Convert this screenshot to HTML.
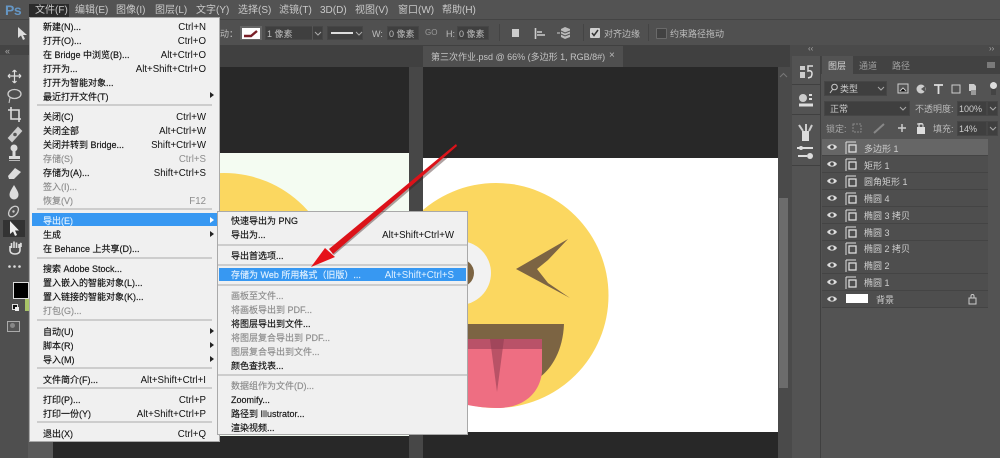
<!DOCTYPE html>
<html><head><meta charset="utf-8">
<style>
html,body{margin:0;padding:0;background:#282828}
#p{position:relative;width:1000px;height:458px;overflow:hidden;background:#282828;font-family:"Liberation Sans","Noto Sans CJK SC",sans-serif;font-size:9px;filter:blur(.3px)}
.a{position:absolute}
.t{position:absolute;white-space:nowrap;line-height:14px}
.m{color:#c9c9c9;top:4px;font-size:10px}
.o{color:#bdbdbd;line-height:14px;position:absolute;white-space:nowrap;font-size:9px;margin-top:1px}
#menu,#sub{position:absolute;background:#f0f0f0;border:1px solid #a9a9a9;box-sizing:border-box}
#menu{left:29px;top:17px;width:191px;height:425px}
#sub{left:217px;top:211px;width:251px;height:224px}
.i{position:absolute;left:13px;line-height:14px;color:#111;white-space:nowrap;margin-top:.5px;-webkit-text-stroke:.15px currentColor}
#sub .i{left:13px}
.k{position:absolute;right:13px;line-height:14px;color:#111;white-space:nowrap;font-size:9.7px;margin-top:1.5px}
#sub .k{right:13px}
.d{color:#8d8d8d}
.s{position:absolute;left:7px;right:7px;height:2px;background:#cdcdcd}
#sub .s{left:0;right:0}
.r{position:absolute;right:5px;width:0;height:0;border-left:4px solid #222;border-top:3px solid transparent;border-bottom:3px solid transparent}
.row{position:absolute;left:822px;width:166px;height:16px;background:#4e4e4e;border-bottom:1px solid #444}
.n{position:absolute;left:864px;color:#cfcfcf;line-height:14px;white-space:nowrap;font-size:9px;margin-top:1px}
.box{position:absolute;background:#3f3f3f;border:1px solid #464646;box-sizing:border-box}
.p9{font-size:9px}
</style></head><body><div id="p">

<!-- bars -->
<div class="a" style="left:0;top:0;width:1000px;height:19px;background:#535353"></div>
<div class="a" style="left:0;top:19px;width:1000px;height:26px;background:#505050;border-top:1px solid #444;box-sizing:border-box"></div>
<div class="a" style="left:0;top:45px;width:1000px;height:22px;background:#404040"></div>
<div class="a" style="left:0;top:45px;width:28px;height:413px;background:#4f4f4f"></div>
<div class="a" style="left:28px;top:45px;width:25px;height:413px;background:#5a5a5a"></div>
<div class="a" style="left:0;top:45px;width:53px;height:10px;background:#444"></div>
<div class="t" style="left:5px;top:44px;color:#aaa;font-size:9px">«</div>
<div class="t" style="left:5px;top:-1px;font-size:14px;font-weight:bold;line-height:22px;letter-spacing:-.5px;color:#6596c4">Ps</div>
<div class="a" style="left:29px;top:4px;width:40px;height:14px;background:#2b2b2b"></div>
<div class="t m" style="left:35px">文件(F)</div>
<div class="t m" style="left:75px">编辑(E)</div>
<div class="t m" style="left:116px">图像(I)</div>
<div class="t m" style="left:155px">图层(L)</div>
<div class="t m" style="left:196px">文字(Y)</div>
<div class="t m" style="left:238px">选择(S)</div>
<div class="t m" style="left:279px">滤镜(T)</div>
<div class="t m" style="left:320px">3D(D)</div>
<div class="t m" style="left:355px">视图(V)</div>
<div class="t m" style="left:398px">窗口(W)</div>
<div class="t m" style="left:442px">帮助(H)</div>

<!-- options -->
<svg class="a" style="left:16px;top:26px" width="12" height="15"><path d="M2 1V12L5 9.500 7 14 9 13 7 9H11Z" fill="#ddd"/></svg>
<div class="o" style="left:220px;top:26px">动：</div>
<div class="a" style="left:240px;top:26px;width:22px;height:14px;background:#666"></div>
<svg class="a" style="left:242px;top:28px" width="18" height="11"><rect width="18" height="11" fill="#fff"/><path d="M2 8H9L15 3" stroke="#7a2028" stroke-width="2.400" fill="none"/></svg>
<div class="box" style="left:265px;top:26px;width:58px;height:14px"></div>
<div class="o" style="left:267px;top:26px">1 像素</div>
<div class="a" style="left:312px;top:26px;width:1px;height:14px;background:#555"></div>
<svg class="a" style="left:314px;top:31px" width="8" height="5"><path d="M1 1L4 4 7 1" stroke="#aaa" fill="none"/></svg>
<div class="box" style="left:327px;top:26px;width:36px;height:14px"></div>
<div class="a" style="left:331px;top:32px;width:22px;height:2px;background:#ddd"></div>
<svg class="a" style="left:355px;top:31px" width="8" height="5"><path d="M1 1L4 4 7 1" stroke="#aaa" fill="none"/></svg>
<div class="o" style="left:372px;top:26px">W:</div>
<div class="box" style="left:387px;top:26px;width:32px;height:14px"></div>
<div class="o" style="left:389px;top:26px">0 像素</div>
<div class="o" style="left:425px;top:25px;font-size:8px;color:#999">GO</div>
<div class="o" style="left:446px;top:26px">H:</div>
<div class="box" style="left:457px;top:26px;width:32px;height:14px"></div>
<div class="o" style="left:459px;top:26px">0 像素</div>
<div class="a" style="left:499px;top:24px;width:1px;height:17px;background:#444"></div>
<div class="a" style="left:512px;top:29px;width:7px;height:8px;background:#ccc"></div>
<svg class="a" style="left:534px;top:27px" width="14" height="14"><path d="M1.500 1V12M3 5H8M3 8H11" stroke="#ccc" stroke-width="1.600" fill="none"/></svg>
<svg class="a" style="left:556px;top:26px" width="16" height="15"><path d="M9 1L14 3V11L9 13 5 11V3Z" fill="#bbb"/><path d="M5 5L9 7 14 5M5 8L9 10 14 8" stroke="#555" fill="none"/><path d="M1 7H4" stroke="#ccc"/></svg>
<div class="a" style="left:583px;top:24px;width:1px;height:17px;background:#444"></div>
<div class="a" style="left:590px;top:28px;width:10px;height:10px;background:#cfcfcf;border-radius:1px"></div>
<svg class="a" style="left:591px;top:29px" width="8" height="8"><path d="M1 4L3 6.500 7 1" stroke="#333" stroke-width="1.500" fill="none"/></svg>
<div class="o" style="left:604px;top:26px">对齐边缘</div>
<div class="a" style="left:648px;top:24px;width:1px;height:17px;background:#444"></div>
<div class="a" style="left:656px;top:28px;width:9px;height:9px;background:#424242;border:1px solid #6a6a6a;border-radius:1px"></div>
<div class="o" style="left:670px;top:26px">约束路径拖动</div>

<!-- tab -->
<div class="a" style="left:423px;top:46px;width:200px;height:21px;background:#4f4f4f"></div>
<div class="t p9" style="left:431px;top:50px;color:#c4c4c4">第三次作业.psd @ 66% (多边形 1, RGB/8#)</div>
<div class="t" style="left:609px;top:49px;color:#bbb;font-size:10px">×</div>

<!-- canvases -->
<div class="a" style="left:53px;top:67px;width:356px;height:391px;background:#282828"></div>
<div class="a" style="left:409px;top:67px;width:14px;height:391px;background:#474747"></div>
<div class="a" style="left:53px;top:153px;width:356px;height:283px;background:#f4fcf2"></div>
<div class="a" style="left:423px;top:158px;width:355px;height:274px;background:#fff"></div>
<svg class="a" style="left:0;top:0" width="1000" height="458">
<clipPath id="l"><rect x="53" y="153" width="356" height="283"/></clipPath>
<clipPath id="rc"><rect x="423" y="158" width="355" height="274"/></clipPath>
<circle cx="224" cy="285" r="112" fill="#fbd760" clip-path="url(#l)"/>
<g clip-path="url(#rc)">
<circle cx="496" cy="295.500" r="112.500" fill="#fbd760"/>
<circle cx="459" cy="273" r="32" fill="#f2f2f2"/>
<circle cx="460" cy="273" r="14" fill="#7c6443"/>
<path d="M568 239L516 269 570 298 548 283 537 269 548 260Z" fill="#7c6443"/>
<path d="M420 324H564C563 350 552 368 540 377H420Z" fill="#7c6443"/>
<path d="M420 339H542V372C540 392 525 408 497 408 470 408 440 400 420 385Z" fill="#ee6e82"/>
<path d="M420 339H542V349H420Z" fill="#b95268"/>
<path d="M490 339H504L497 392Z" fill="#8e3c50" opacity=".55"/>
</g>
</svg>

<!-- scrollbar -->
<div class="a" style="left:778px;top:67px;width:12px;height:391px;background:#4a4a4a"></div>
<div class="a" style="left:779px;top:198px;width:9px;height:190px;background:#6c6c6c"></div>
<svg class="a" style="left:779px;top:72px" width="9" height="6"><path d="M1 5L4.500 1.500 8 5" stroke="#777" fill="none"/></svg>

<!-- dock + panel -->
<div class="a" style="left:790px;top:45px;width:210px;height:413px;background:#4a4a4a"></div>
<div class="a" style="left:792px;top:56px;width:28px;height:402px;background:#535353"></div>
<div class="a" style="left:792px;top:84px;width:28px;height:1px;background:#404040"></div>
<div class="a" style="left:792px;top:114px;width:28px;height:1px;background:#404040"></div>
<div class="a" style="left:792px;top:165px;width:28px;height:1px;background:#404040"></div>
<div class="a" style="left:820px;top:56px;width:1px;height:402px;background:#404040"></div>
<div class="a" style="left:821px;top:56px;width:179px;height:402px;background:#535353"></div>
<div class="a" style="left:821px;top:56px;width:179px;height:18px;background:#424242"></div>
<div class="a" style="left:822px;top:56px;width:31px;height:18px;background:#535353"></div>
<div class="t" style="left:808px;top:42px;color:#aaa;font-size:8px">‹‹</div>
<div class="t" style="left:989px;top:42px;color:#aaa;font-size:8px">››</div>
<div class="t p9" style="left:828px;top:59px;color:#d4d4d4">图层</div>
<div class="t p9" style="left:859px;top:59px;color:#a0a0a0">通道</div>
<div class="t p9" style="left:892px;top:59px;color:#a0a0a0">路径</div>
<div class="a" style="left:987px;top:62px;width:8px;height:6px;background:#7a7a7a"></div>
<svg class="a" style="left:798px;top:64px" width="18" height="16"><path d="M2 2H7V6H2ZM2 8H7V14H2Z" fill="#ccc"/><path d="M15 2H10V7C14 6 15 9 13 13L10 14" stroke="#ddd" stroke-width="1.500" fill="none"/></svg>
<svg class="a" style="left:798px;top:93px" width="18" height="16"><circle cx="5" cy="5" r="4" fill="#ccc"/><path d="M11 2H14M11 6H14" stroke="#ddd" stroke-width="2"/><path d="M1 12H15" stroke="#ddd" stroke-width="3"/></svg>
<svg class="a" style="left:797px;top:123px" width="18" height="38"><path d="M2 2L6 8M9 1V8M15 2L12 8" stroke="#ccc" stroke-width="2"/><rect x="5" y="8" width="7" height="10" fill="#ddd"/><path d="M0 25H8M8 25H16M1 33H10" stroke="#ddd" stroke-width="2"/><circle cx="4" cy="25" r="2" fill="#ddd"/><circle cx="13" cy="33" r="3" fill="#ddd"/></svg>

<div class="box" style="left:824px;top:81px;width:63px;height:15px"></div>
<svg class="a" style="left:829px;top:83px" width="10" height="11"><circle cx="5.500" cy="4" r="2.800" fill="none" stroke="#ccc"/><path d="M3.500 6.500L1 10" stroke="#ccc"/></svg>
<div class="t p9" style="left:840px;top:82px;color:#ccc">类型</div>
<svg class="a" style="left:877px;top:86px" width="8" height="5"><path d="M1 1L4 4 7 1" stroke="#aaa" fill="none"/></svg>
<svg class="a" style="left:897px;top:83px" width="90" height="13"><rect x="1" y="1" width="10" height="9" fill="none" stroke="#ccc"/><path d="M3 8L6 5 9 8" stroke="#ccc"/><circle cx="24" cy="6" r="4.500" fill="#ccc"/><path d="M24 6L28 3V9Z" fill="#555"/><path d="M37 2H46M41.500 2V11" stroke="#ddd" stroke-width="1.800"/><rect x="55" y="2" width="8" height="8" fill="none" stroke="#ccc"/><path d="M72 1H77L79 3V8H72Z" fill="#ccc"/><rect x="74" y="7" width="5" height="5" fill="#999"/></svg>
<div class="a" style="left:991px;top:82px;width:5px;height:13px;background:#444"></div>
<div class="a" style="left:990px;top:82px;width:7px;height:7px;border-radius:50%;background:#ddd"></div>
<div class="box" style="left:824px;top:101px;width:86px;height:15px"></div>
<div class="t p9" style="left:830px;top:102px;color:#ccc">正常</div>
<svg class="a" style="left:899px;top:106px" width="8" height="5"><path d="M1 1L4 4 7 1" stroke="#aaa" fill="none"/></svg>
<div class="t p9" style="left:915px;top:102px;color:#bbb">不透明度:</div>
<div class="box" style="left:957px;top:101px;width:30px;height:15px"></div>
<div class="t p9" style="left:959px;top:102px;color:#ccc">100%</div>
<div class="box" style="left:987px;top:101px;width:11px;height:15px"></div>
<svg class="a" style="left:989px;top:106px" width="8" height="5"><path d="M1 1L4 4 7 1" stroke="#aaa" fill="none"/></svg>
<div class="t p9" style="left:826px;top:122px;color:#aaa">锁定:</div>
<svg class="a" style="left:852px;top:122px" width="72" height="13"><rect x="1" y="2" width="8" height="8" fill="none" stroke="#888" stroke-dasharray="2 1"/><path d="M22 11L32 2" stroke="#888" stroke-width="2"/><path d="M46 6H54M50 2V10" stroke="#ccc" stroke-width="1.500"/><path d="M65 2H71M67 1V9H75M73 11V5" stroke="#ccc" stroke-width="1.200" fill="none"/></svg>
<svg class="a" style="left:916px;top:122px" width="10" height="13"><rect x="1" y="5" width="8" height="7" fill="#ddd"/><path d="M3 5V3C3 1 7 1 7 3V5" stroke="#ddd" fill="none"/></svg>
<div class="t p9" style="left:933px;top:122px;color:#bbb">填充:</div>
<div class="box" style="left:957px;top:121px;width:30px;height:15px"></div>
<div class="t p9" style="left:959px;top:122px;color:#ccc">14%</div>
<div class="box" style="left:987px;top:121px;width:11px;height:15px"></div>
<svg class="a" style="left:989px;top:126px" width="8" height="5"><path d="M1 1L4 4 7 1" stroke="#aaa" fill="none"/></svg>

<div class="row" style="top:139px;background:#666"></div>
<div class="row" style="top:156px"></div><div class="row" style="top:173px"></div><div class="row" style="top:190px"></div><div class="row" style="top:207px"></div><div class="row" style="top:224px"></div><div class="row" style="top:241px"></div><div class="row" style="top:257px"></div><div class="row" style="top:274px"></div><div class="row" style="top:291px"></div>

<svg class="a" style="left:826px;top:139px" width="36" height="170">
<defs><g id="e"><path d="M1 5C3 1.500 9 1.500 11 5 9 8.500 3 8.500 1 5Z" fill="#ddd"/><circle cx="6" cy="5" r="1.800" fill="#444"/></g>
<g id="h"><path d="M20 3V15M20 3H30" stroke="#ddd" fill="none"/><rect x="23" y="6" width="7" height="7" fill="none" stroke="#ddd" stroke-width="1.300"/></g></defs>
<use href="#e" y="3"/><use href="#h" y="0"/>
<use href="#e" y="20"/><use href="#h" y="17"/>
<use href="#e" y="37"/><use href="#h" y="34"/>
<use href="#e" y="54"/><use href="#h" y="51"/>
<use href="#e" y="71"/><use href="#h" y="68"/>
<use href="#e" y="88"/><use href="#h" y="85"/>
<use href="#e" y="104"/><use href="#h" y="101"/>
<use href="#e" y="121"/><use href="#h" y="118"/>
<use href="#e" y="138"/><use href="#h" y="135"/>
<use href="#e" y="155"/>
</svg>
<div class="n" style="top:141px">多边形 1</div>
<div class="n" style="top:158px">矩形 1</div>
<div class="n" style="top:174px">圆角矩形 1</div>
<div class="n" style="top:191px">椭圆 4</div>
<div class="n" style="top:208px">椭圆 3 拷贝</div>
<div class="n" style="top:225px">椭圆 3</div>
<div class="n" style="top:241px">椭圆 2 拷贝</div>
<div class="n" style="top:258px">椭圆 2</div>
<div class="n" style="top:275px">椭圆 1</div>
<div class="a" style="left:846px;top:294px;width:22px;height:9px;background:#fff"></div>
<div class="n" style="top:292px;left:876px">背景</div>
<svg class="a" style="left:968px;top:293px" width="9" height="12"><rect x="1" y="5" width="7" height="6" fill="none" stroke="#ccc"/><path d="M3 5V3C3 1 6 1 6 3V5" stroke="#ccc" fill="none"/></svg>

<!-- tools -->
<svg class="a" style="left:0;top:60px" width="29" height="330">
<path d="M8 16H21M14.500 10V23M8 16L10 14M8 16L10 18M21 16L19 14M21 16L19 18M14.500 10L12.500 12M14.500 10L16.500 12M14.500 23L12.500 21M14.500 23L16.500 21" stroke="#ddd" stroke-width="1.200" fill="none"/>
<ellipse cx="14.500" cy="34" rx="6.500" ry="4.500" fill="none" stroke="#ccc" stroke-width="1.300"/><path d="M10 38L9 43" stroke="#ccc"/>
<path d="M11 47V59H21M8 50H19V62" stroke="#ddd" stroke-width="1.600" fill="none"/>
<path d="M9 78L18 68 21 71 12 81Z" fill="#ccc" stroke="#ccc" stroke-width="2"/><circle cx="15" cy="74.500" r="1.800" fill="#555"/>
<circle cx="14" cy="88" r="3.500" fill="#ddd"/><path d="M14 90V96" stroke="#ddd" stroke-width="3"/><rect x="9" y="96" width="11" height="3" fill="#ddd"/><rect x="9" y="100" width="11" height="1" fill="#bbb"/>
<path d="M8 116L15 108 21 112 14 119H9Z" fill="#ddd"/>
<path d="M14 125C11 130 9.500 132 9.500 135A4.500 4.500 0 0 0 18.500 135C18.500 132 17 130 14 125Z" fill="#ddd"/>
<ellipse cx="13.500" cy="151.500" rx="4" ry="6" transform="rotate(40 13.500 151.500)" fill="none" stroke="#ccc" stroke-width="1.300"/><circle cx="13.500" cy="151.500" r="1.200" fill="#ccc"/>
<rect x="3" y="160" width="22" height="17" fill="#333"/>
<path d="M10 161V174L13 171.500 15 176 17 175 15 170.500H19Z" fill="#eee"/>
<path d="M10 186V190C10 192.500 12 194 15 194 18 194 20 192.500 20 190V185L21 183V187M11.500 188V183M14 188V181.500M16.500 188V182.500M19 188V184" stroke="#ddd" stroke-width="1.600" fill="none"/>
<circle cx="9.500" cy="206.500" r="1.300" fill="#ddd"/><circle cx="14.500" cy="206.500" r="1.300" fill="#ddd"/><circle cx="19.500" cy="206.500" r="1.300" fill="#ddd"/>
</svg>
<div class="a" style="left:25px;top:299px;width:5px;height:12px;background:#a8c468"></div>
<div class="a" style="left:13px;top:282px;width:16px;height:17px;background:#000;border:1px solid #ddd;box-sizing:border-box"></div>
<div class="a" style="left:12px;top:304px;width:4px;height:4px;background:#111;border:1px solid #ddd"></div>
<div class="a" style="left:15px;top:307px;width:4px;height:4px;background:#eee"></div>
<div class="a" style="left:7px;top:321px;width:11px;height:9px;border:1px solid #aaa;background:#555"></div>
<div class="a" style="left:10px;top:323px;width:5px;height:5px;border-radius:50%;background:#888"></div>

<!-- file menu -->
<div id="menu">
<div class="i" style="top:1px">新建(N)...</div><div class="k" style="top:1px">Ctrl+N</div>
<div class="i" style="top:15px">打开(O)...</div><div class="k" style="top:15px">Ctrl+O</div>
<div class="i" style="top:29px">在 Bridge 中浏览(B)...</div><div class="k" style="top:29px">Alt+Ctrl+O</div>
<div class="i" style="top:43px">打开为...</div><div class="k" style="top:43px">Alt+Shift+Ctrl+O</div>
<div class="i" style="top:57px">打开为智能对象...</div>
<div class="i" style="top:71px">最近打开文件(T)</div><div class="r" style="top:74px"></div>
<div class="s" style="top:86px"></div>
<div class="i" style="top:91px">关闭(C)</div><div class="k" style="top:91px">Ctrl+W</div>
<div class="i" style="top:105px">关闭全部</div><div class="k" style="top:105px">Alt+Ctrl+W</div>
<div class="i" style="top:119px">关闭并转到 Bridge...</div><div class="k" style="top:119px">Shift+Ctrl+W</div>
<div class="i d" style="top:133px">存储(S)</div><div class="k d" style="top:133px">Ctrl+S</div>
<div class="i" style="top:147px">存储为(A)...</div><div class="k" style="top:147px">Shift+Ctrl+S</div>
<div class="i d" style="top:161px">签入(I)...</div>
<div class="i d" style="top:175px">恢复(V)</div><div class="k d" style="top:175px">F12</div>
<div class="s" style="top:190px"></div>
<div class="a" style="left:2px;top:195px;width:186px;height:13px;background:#3798f2"></div>
<div class="i" style="top:195px;color:#dff0ff">导出(E)</div><div class="r" style="top:199px;border-left-color:#fff"></div>
<div class="i" style="top:209px">生成</div><div class="r" style="top:213px"></div>
<div class="i" style="top:223px">在 Behance 上共享(D)...</div>
<div class="s" style="top:239px"></div>
<div class="i" style="top:243px">搜索 Adobe Stock...</div>
<div class="i" style="top:257px">置入嵌入的智能对象(L)...</div>
<div class="i" style="top:271px">置入链接的智能对象(K)...</div>
<div class="i d" style="top:285px">打包(G)...</div>
<div class="s" style="top:301px"></div>
<div class="i" style="top:306px">自动(U)</div><div class="r" style="top:310px"></div>
<div class="i" style="top:320px">脚本(R)</div><div class="r" style="top:324px"></div>
<div class="i" style="top:334px">导入(M)</div><div class="r" style="top:338px"></div>
<div class="s" style="top:349px"></div>
<div class="i" style="top:354px">文件简介(F)...</div><div class="k" style="top:354px">Alt+Shift+Ctrl+I</div>
<div class="s" style="top:369px"></div>
<div class="i" style="top:374px">打印(P)...</div><div class="k" style="top:374px">Ctrl+P</div>
<div class="i" style="top:388px">打印一份(Y)</div><div class="k" style="top:388px">Alt+Shift+Ctrl+P</div>
<div class="s" style="top:403px"></div>
<div class="i" style="top:408px">退出(X)</div><div class="k" style="top:408px">Ctrl+Q</div>
</div>

<!-- export submenu -->
<div id="sub">
<div class="i" style="top:1px">快速导出为 PNG</div>
<div class="i" style="top:15px">导出为...</div><div class="k" style="top:15px">Alt+Shift+Ctrl+W</div>
<div class="s" style="top:32px"></div>
<div class="i" style="top:36px">导出首选项...</div>
<div class="s" style="top:52px"></div>
<div class="a" style="left:1px;top:56px;width:247px;height:13px;background:#3798f2"></div>
<div class="i" style="top:55px;color:#dff0ff">存储为 Web 所用格式（旧版）...</div><div class="k" style="top:55px;color:#dff0ff">Alt+Shift+Ctrl+S</div>
<div class="s" style="top:72px"></div>
<div class="i d" style="top:76px">画板至文件...</div>
<div class="i d" style="top:90px">将画板导出到 PDF...</div>
<div class="i" style="top:104px">将图层导出到文件...</div>
<div class="i d" style="top:118px">将图层复合导出到 PDF...</div>
<div class="i d" style="top:132px">图层复合导出到文件...</div>
<div class="i" style="top:146px">颜色查找表...</div>
<div class="s" style="top:162px"></div>
<div class="i d" style="top:166px">数据组作为文件(D)...</div>
<div class="i" style="top:180px">Zoomify...</div>
<div class="i" style="top:194px">路径到 Illustrator...</div>
<div class="i" style="top:208px">渲染视频...</div>
</div>

<!-- arrow -->
<svg class="a" style="left:0;top:0" width="1000" height="458">
<path d="M458 147L333 254" stroke="#3a1a1a" stroke-width="3" opacity=".4"/>
<path d="M456 144L457 146 333 254 329 249Z" fill="#dc1219"/>
<path d="M311 267L325 248 335 257Z" fill="#e6121a"/>
</svg>
</div></body></html>
